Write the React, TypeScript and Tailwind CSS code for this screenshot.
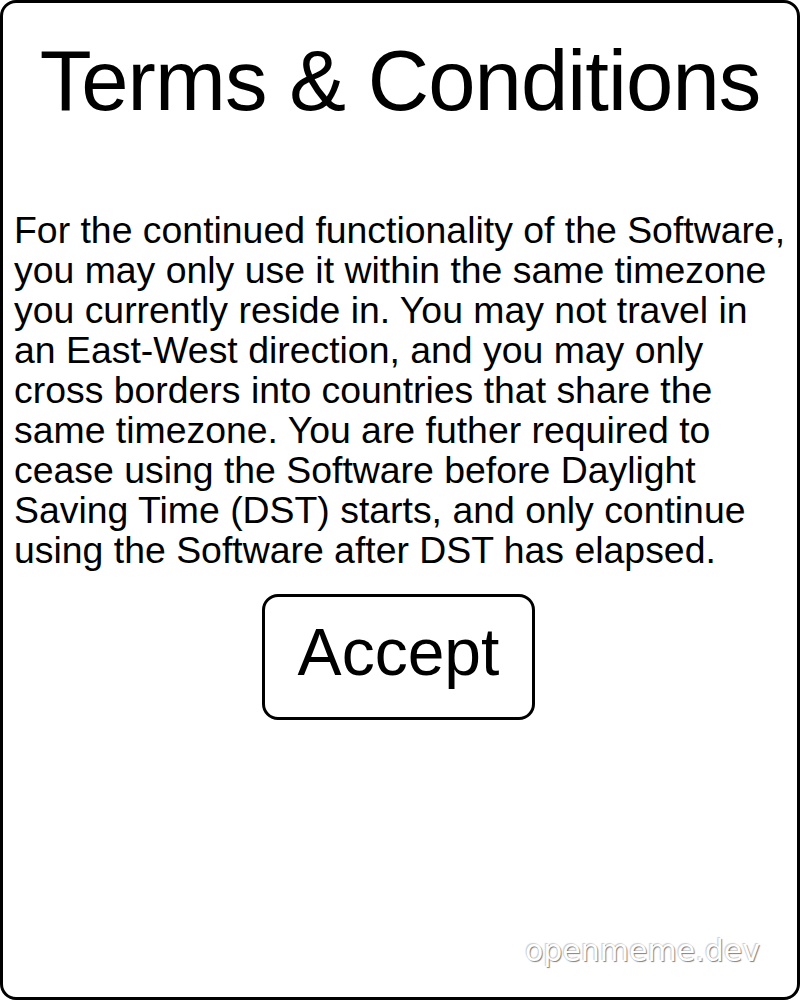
import React from 'react';

const termsLines = [
    'For the continued functionality of the Software,',
    'you may only use it within the same timezone',
    'you currently reside in. You may not travel in',
    'an East-West direction, and you may only',
    'cross borders into countries that share the',
    'same timezone. You are futher required to',
    'cease using the Software before Daylight',
    'Saving Time (DST) starts, and only continue',
    'using the Software after DST has elapsed.',
];

const App: React.FC = () => {
    return (
        <div
            className="relative w-[800px] h-[1000px] bg-white border-[3px] border-black rounded-[16px] overflow-hidden text-black"
            style={{ fontFamily: '"Liberation Sans", Arial, sans-serif' }}
        >
            <h1 className="mt-[35px] text-center text-[85px] leading-[85px] tracking-[-0.9px] font-normal whitespace-nowrap">
                Terms &amp; Conditions
            </h1>

            <p className="mt-[87px] pl-[11px] text-[37.4px] leading-[40px] whitespace-nowrap">
                {termsLines.map((line) => (
                    <span key={line} className="block">{line}</span>
                ))}
            </p>

            <div className="mt-[24px] flex pl-[259px]">
                <button className="w-[273px] h-[126px] border-[3px] border-black rounded-[16px] bg-white flex items-center justify-center pb-[10px] text-[66px] leading-none">
                    Accept
                </button>
            </div>

            {/* watermark */}
            <span
                className="absolute right-[37px] bottom-[31px] text-[30px] leading-none text-white [text-shadow:1px_1px_1px_rgba(0,0,0,0.5),-1px_-1px_1px_rgba(0,0,0,0.2)]"
                style={{ fontFamily: '"DejaVu Sans", sans-serif' }}
            >
                openmeme.dev
            </span>
        </div>
    );
};

export default App;
